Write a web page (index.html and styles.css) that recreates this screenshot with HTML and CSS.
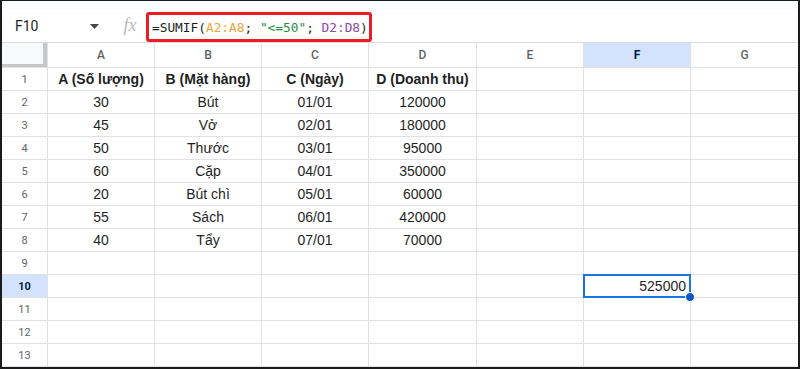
FILE: index.html
```html
<!DOCTYPE html>
<html lang="vi">
<head>
  <meta charset="UTF-8" />
  <title>SUMIF</title>
  <link rel="stylesheet" href="styles.css">
</head>
<body>
  <div class="frame">
    <div class="top-band"></div>

    <div class="formula-bar">
      <div class="name-box">
        <span>F10</span>
        <svg class="caret" width="9" height="5" viewBox="0 0 9 5"><path d="M0 0h9L4.5 5z" fill="#444746"/></svg>
      </div>
      <span class="fx">fx</span>
      <div class="formula">=SUMIF(<span class="ref-a">A2:A8</span>; <span class="str">"&lt;=50"</span>; <span class="ref-d">D2:D8</span>)</div>
    </div>

    <div class="grid" id="grid"></div>
  </div>

  <script>
    // build the sheet cells
    const cols = ['A', 'B', 'C', 'D', 'E', 'F', 'G'];
    const data = {
      1: ['A (Số lượng)', 'B (Mặt hàng)', 'C (Ngày)', 'D (Doanh thu)'],
      2: ['30', 'Bút', '01/01', '120000'],
      3: ['45', 'Vở', '02/01', '180000'],
      4: ['50', 'Thước', '03/01', '95000'],
      5: ['60', 'Cặp', '04/01', '350000'],
      6: ['20', 'Bút chì', '05/01', '60000'],
      7: ['55', 'Sách', '06/01', '420000'],
      8: ['40', 'Tẩy', '07/01', '70000']
    };
    const grid = document.getElementById('grid');
    let html = '<div class="corner"></div>';
    cols.forEach(c => {
      html += `<div class="col-head${c === 'F' ? ' active' : ''}">${c}</div>`;
    });
    for (let r = 1; r <= 13; r++) {
      html += `<div class="row-head${r === 10 ? ' active' : ''}">${r}</div>`;
      cols.forEach((c, i) => {
        const val = data[r] ? (data[r][i] || '') : '';
        let cls = 'cell';
        if (r === 1) cls += ' bold';
        if (r === 10 && c === 'F') {
          html += '<div class="cell num selected">525000</div>';
          return;
        }
        html += `<div class="${cls}">${val}</div>`;
      });
    }
    grid.innerHTML = html;
  </script>
</body>
</html>
```

FILE: styles.css
```css
body { margin: 0; background: #fff; font-family: "Liberation Sans", Arial, sans-serif; }
.frame { width: 800px; height: 369px; box-sizing: border-box; border: 2px solid #1b1b1b; border-top-width: 1px; overflow: hidden; display: flex; flex-direction: column; }
.top-band { height: 8px; background: #f9fbfd; flex: none; }

.formula-bar { height: 33px; flex: none; display: flex; align-items: flex-end; }
.name-box { width: 112px; height: 33px; display: flex; align-items: center; justify-content: space-between; padding: 0 15px 0 13px; box-sizing: border-box; font-family: Roboto, sans-serif; font-size: 14px; color: #1f1f1f; }
.caret { margin-top: 1px; }
.fx { width: 32px; height: 33px; line-height: 33px; text-align: center; font-family: "Liberation Serif", serif; font-style: italic; font-size: 18px; color: #b8b8b8; }
.formula { height: 30px; box-sizing: border-box; width: 226px; border: 3px solid #ec1c24; border-radius: 3px; padding-left: 3px; display: flex; align-items: center; font-family: "DejaVu Sans Mono", monospace; font-size: 12.8px; color: #1f1f1f; white-space: pre; }
.ref-a { color: #f0a23b; }
.str { color: #1e8e3e; }
.ref-d { color: #8e4ba6; }

.grid { flex: 1; display: grid; grid-template-columns: 45px 106px 106px 106px 107px 106px 106px 1fr; grid-template-rows: 24px; grid-auto-rows: 22px; gap: 1px; background: #e1e1e1; border-top: 1px solid #dadce0; }
.corner { background: #f8f9fa; box-shadow: inset -4px -3px 0 #c7c7c7; }
.col-head, .row-head { background: #fff; display: flex; align-items: center; justify-content: center; font-family: Roboto, sans-serif; color: #5f6368; }
.col-head { font-size: 12px; font-weight: 500; }
.row-head { font-size: 11px; }
.col-head.active, .row-head.active { background: #d3e3fd; color: #041e49; font-weight: 700; }
.cell { background: #fff; display: flex; align-items: center; justify-content: center; font-size: 14px; color: #1f1f1f; position: relative; }
.cell.bold { font-weight: 700; }
.cell.num { justify-content: flex-end; padding-right: 4px; }
.selected { z-index: 2; }
.selected::before { content: ""; position: absolute; inset: -1px -1px -1px -1px; border: 2px solid #1a73e8; }
.selected::after { content: ""; position: absolute; right: -5px; bottom: -5px; width: 8px; height: 8px; border-radius: 50%; background: #0b57d0; border: 1px solid #fff; }
```
